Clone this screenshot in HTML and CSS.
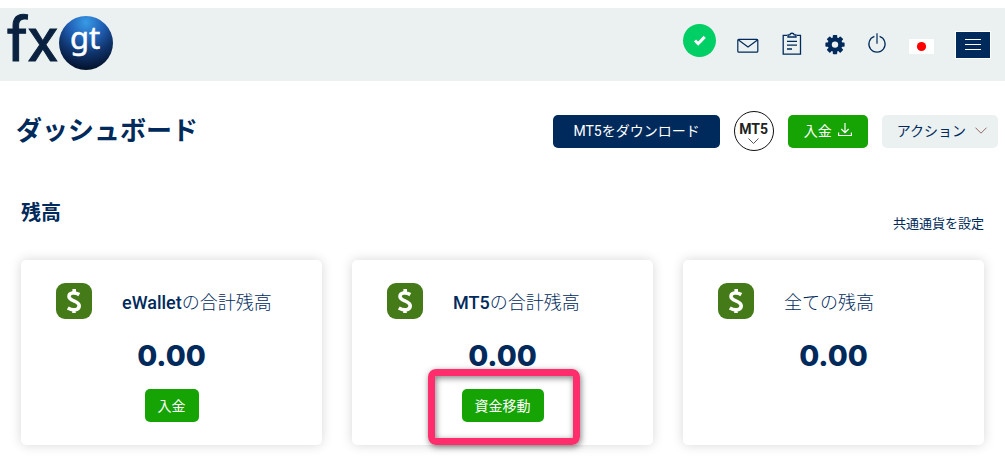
FILE: index.html
```html
<!DOCTYPE html>
<html lang="ja">
<head>
<meta charset="utf-8">
<meta name="viewport" content="width=device-width, initial-scale=1">
<title>ダッシュボード</title>
<link rel="stylesheet" href="styles.css">
</head>
<body>
<header class="topbar">
  <a class="logo" href="#" aria-label="fxgt">
    <svg width="120" height="73" viewBox="0 8 120 73">
      <defs>
        <radialGradient id="ball" cx="50%" cy="12%" r="88%">
          <stop offset="0" stop-color="#389be6"/>
          <stop offset=".35" stop-color="#2162b8"/>
          <stop offset=".65" stop-color="#10356f"/>
          <stop offset="1" stop-color="#03112b"/>
        </radialGradient>
      </defs>
      <text class="logo-fx" x="6" y="61">fx</text>
      <circle cx="86" cy="43" r="27" fill="url(#ball)"/>
      <text class="logo-gt" x="70" y="49">gt</text>
    </svg>
  </a>
  <nav class="tools">
    <a class="verified" href="#" aria-label="認証済み">
      <svg width="33" height="33" viewBox="0 0 33 33"><path d="M12 16.500l3.200 3.200 6.500-6.800" fill="none" stroke="#fff" stroke-width="3"/></svg>
    </a>
    <a class="tool" href="#" aria-label="メール">
      <svg width="22" height="24" viewBox="0 0 22 24" fill="none" stroke="#002a5b" stroke-width="1.200"><rect x=".8" y="6.300" width="20" height="12.900" rx="1"/><path d="M1.200 6.800L11 14l9.800-7.200"/></svg>
    </a>
    <a class="tool" href="#" aria-label="レポート">
      <svg width="20" height="24" viewBox="0 0 20 24" fill="none" stroke="#002a5b" stroke-width="1.300"><path d="M5 2.300H1.200v18.900h17.300V2.300H15M6 4V1.800h1.800C8.200-.3 11.800-.3 12.200 1.800H14V4zM5 8.300h10M5 12.200h10M5 16h5"/></svg>
    </a>
    <a class="tool" href="#" aria-label="設定">
      <svg width="20" height="24" viewBox="0 0 20 24"><g fill="#002a5b"><g id="teeth"><rect x="7.800" y="2" width="4.400" height="19.200" rx=".7"/><rect x=".4" y="9.400" width="19.200" height="4.400" rx=".7"/></g><use href="#teeth" transform="rotate(45 10 11.600)"/><circle cx="10" cy="11.600" r="7.400"/></g><circle cx="10" cy="11.600" r="3.200" fill="#ebf1f1"/></svg>
    </a>
    <a class="tool" href="#" aria-label="ログアウト">
      <svg width="18" height="24" viewBox="0 0 18 24" fill="none" stroke="#002a5b" stroke-width="1.200"><path d="M6.400 3.400a8.100 8.100 0 1 0 5.200 0M9 .3v10.500"/></svg>
    </a>
    <a class="tool" href="#" aria-label="日本語">
      <svg width="25" height="24" viewBox="0 0 25 24"><path fill="#fff" d="M0 6h25v15H0z"/><circle cx="12.500" cy="13.500" r="4.600" fill="#f00"/></svg>
    </a>
    <button class="menu" type="button" aria-label="メニュー">
      <svg width="16" height="13" viewBox="0 0 16 13" stroke="#fff"><path d="M0 1.500h16M0 6.500h16M0 11.500h16"/></svg>
    </button>
  </nav>
</header>

<main>
  <div class="heading">
    <h1 class="title">ダッシュボード</h1>
    <div class="actions">
      <button class="btn btn-navy" type="button">MT5をダウンロード</button>
      <button class="platform" type="button">MT5
        <svg width="11" height="6" viewBox="0 0 11 6" fill="none" stroke="#555"><path d="M.5.5l5 5 5-5"/></svg>
      </button>
      <button class="btn btn-deposit" type="button">入金
        <svg width="14" height="14" viewBox="0 0 14 14" fill="none" stroke="#fff" stroke-width="1.200"><path d="M7 0v9.500M3.300 6L7 9.700 10.700 6M.6 9.500v3h12.800v-3"/></svg>
      </button>
      <button class="btn btn-gray" type="button">アクション
        <svg width="12" height="7" viewBox="0 0 12 7" fill="none" stroke="#966"><path d="M.5.7L6 6.200 11.500.7"/></svg>
      </button>
    </div>
  </div>

  <section class="balances">
    <div class="section-head">
      <h2 class="section-title">残高</h2>
      <a class="currency" href="#">共通通貨を設定</a>
    </div>
    <div class="cards">
      <article class="card">
        <div class="card-head">
          <svg class="coin" width="36" height="36" viewBox="0 0 36 36"><rect width="36" height="36" rx="9" fill="#457a18"/><path d="M23.300 11.600C18.500 8.700 13 9.800 13 13.500c0 4.800 10.200 3.900 10.200 9.300 0 4.200-6 5.500-11.400 2.200M18.200 6v4M18 26v4" fill="none" stroke="#fff" stroke-width="3.600"/></svg>
          <h3 class="card-title"><span class="latin">eWallet</span>の合計残高</h3>
        </div>
        <p class="amount">0.00</p>
        <button class="btn btn-green" type="button">入金</button>
      </article>
      <article class="card">
        <div class="card-head">
          <svg class="coin" width="36" height="36" viewBox="0 0 36 36"><rect width="36" height="36" rx="9" fill="#457a18"/><path d="M23.300 11.600C18.500 8.700 13 9.800 13 13.500c0 4.800 10.200 3.900 10.200 9.300 0 4.200-6 5.500-11.400 2.200M18.200 6v4M18 26v4" fill="none" stroke="#fff" stroke-width="3.600"/></svg>
          <h3 class="card-title"><span class="latin">MT5</span>の合計残高</h3>
        </div>
        <p class="amount">0.00</p>
        <div class="marked">
          <button class="btn btn-green" type="button">資金移動</button>
          <span class="marker"></span>
        </div>
      </article>
      <article class="card">
        <div class="card-head">
          <svg class="coin" width="36" height="36" viewBox="0 0 36 36"><rect width="36" height="36" rx="9" fill="#457a18"/><path d="M23.300 11.600C18.500 8.700 13 9.800 13 13.500c0 4.800 10.200 3.900 10.200 9.300 0 4.200-6 5.500-11.400 2.200M18.200 6v4M18 26v4" fill="none" stroke="#fff" stroke-width="3.600"/></svg>
          <h3 class="card-title">全ての残高</h3>
        </div>
        <p class="amount">0.00</p>
      </article>
    </div>
  </section>
</main>
</body>
</html>
```

FILE: styles.css
```css
* {
  box-sizing: border-box;
}

body {
  margin: 0;
  padding-top: 8px;
  background: #fff;
  color: #002a5b;
  font-family: Roboto, "Noto Sans CJK JP", sans-serif;
  font-size: 14px;
}

h1, h2, h3, p {
  margin: 0;
}

a {
  color: inherit;
  text-decoration: none;
}

svg {
  display: block;
  flex: none;
  overflow: visible;
}

button {
  margin: 0;
  border: 0;
  font: inherit;
  cursor: pointer;
}

.topbar {
  display: flex;
  align-items: center;
  justify-content: space-between;
  background: #ebf1f1;
  padding-right: 14px;
}

.logo-fx {
  font: 400 62px Roboto, sans-serif;
  fill: #0a2240;
  stroke: #0a2240;
}

.logo-gt {
  font: 400 31px "Noto Sans", sans-serif;
  fill: #fff;
  stroke: #fff;
  stroke-width: .5px;
}

.tools {
  display: flex;
  align-items: center;
  gap: 23px;
  height: 41px;
}

.verified {
  align-self: flex-start;
  margin-right: -2px;
  border-radius: 50%;
  background: #00cf66;
}

.menu {
  display: grid;
  place-items: center;
  width: 36px;
  height: 28px;
  margin-left: -2px;
  border: 1px solid #fff;
  background: #002a5b;
}

.heading {
  display: flex;
  align-items: center;
  justify-content: space-between;
  padding: 30px 7px 0 16px;
}

.title {
  font-size: 26px;
  line-height: 40px;
  font-weight: 700;
}

.actions {
  display: flex;
  align-items: center;
  gap: 14px;
}

.btn {
  display: flex;
  align-items: center;
  gap: 6px;
  height: 33px;
  padding: 0 13px 2px;
  border-radius: 5px;
  color: #fff;
}

.btn-navy {
  padding: 0 20px 2px;
  background: #002a5b;
}

.platform {
  display: flex;
  flex-direction: column;
  align-items: center;
  justify-content: center;
  width: 40px;
  height: 40px;
  padding: 2px 0 0;
  border: 1px solid #111;
  border-radius: 50%;
  background: #fff;
  color: #222;
  font-weight: 700;
  line-height: 18px;
}

.btn-deposit {
  padding: 0 16px 2px;
  background: #16a404;
}

.btn-gray {
  gap: 9px;
  padding: 0 11px 2px 15px;
  background: #ebf1f1;
  color: #002a5b;
}

.balances {
  padding: 47px 21px 32px;
}

.section-head {
  display: flex;
  align-items: flex-start;
  justify-content: space-between;
  height: 62px;
}

.section-title {
  font-size: 20px;
  line-height: 30px;
  font-weight: 700;
}

.currency {
  padding-top: 16px;
  font-size: 13px;
  line-height: 20px;
}

.cards {
  display: grid;
  grid-template-columns: repeat(3, 1fr);
  gap: 30px;
}

.card {
  display: flex;
  flex-direction: column;
  align-items: center;
  padding: 23px 35px;
  border-radius: 5px;
  background: #fff;
  box-shadow: 0 0 12px rgba(0, 0, 0, .16);
}

.card-head {
  display: flex;
  align-items: center;
  align-self: stretch;
  gap: 30px;
}

.card-title {
  padding-top: 4px;
  font-size: 18px;
  line-height: 32px;
  font-weight: 300;
  white-space: nowrap;
}

.latin {
  font-weight: 500;
}

.amount {
  padding: 18px 0 14px;
  font: 800 29px/38px Inter, sans-serif;
}

.btn-green {
  background: #16a404;
}

.marked {
  position: relative;
}

.marker {
  position: absolute;
  inset: -20px -36px -23px -34px;
  border: 7px solid #ff2d6b;
  border-radius: 8px;
  box-shadow: 1px 2px 6px rgba(0, 0, 0, .5), inset 1px 2px 6px rgba(0, 0, 0, .5);
  pointer-events: none;
}
```
